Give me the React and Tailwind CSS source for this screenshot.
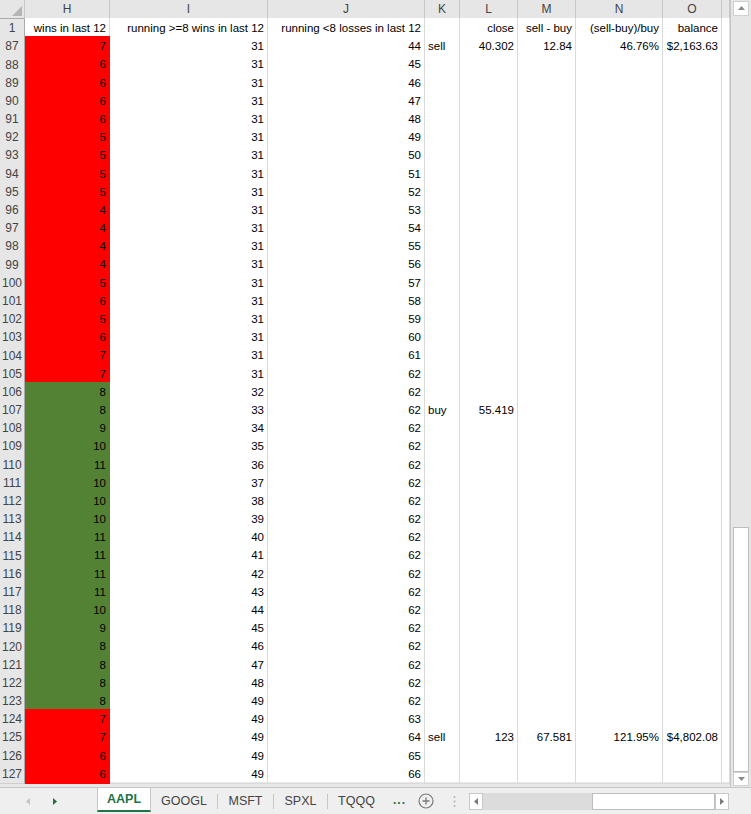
import React from "react";

const H_VALUES = [
  7, 6, 6, 6, 6, 5, 5, 5, 5, 4, 4, 4, 4, 5, 6, 5, 6, 7, 7,
  8, 8, 9, 10, 11, 10, 10, 10, 11, 11, 11, 11, 10, 9, 8, 8, 8, 8,
  7, 7, 6, 6,
];

const TRADES = {
  87: { k: "sell", l: "40.302", m: "12.84", n: "46.76%", o: "$2,163.63" },
  107: { k: "buy", l: "55.419" },
  125: { k: "sell", l: "123", m: "67.581", n: "121.95%", o: "$4,802.08" },
};

const ROWS = H_VALUES.map((h, idx) => {
  const r = 87 + idx;
  const i = r <= 105 ? 31 : r <= 123 ? r - 74 : 49;
  const j = r <= 105 ? r - 43 : r <= 123 ? 62 : r - 61;
  const green = r >= 106 && r <= 123;
  return { r, h, i, j, green, ...(TRADES[r] || {}) };
});

const COLS = "grid grid-cols-[25px_85px_158px_157px_35px_58px_58px_87px_59px_8px]";

function Cell({ children, left = false }) {
  return (
    <div
      className={
        "flex items-center overflow-hidden whitespace-nowrap border-r border-b border-[#dadada] px-[3px] pt-[2px] " +
        (left ? "justify-start" : "justify-end")
      }
    >
      {children}
    </div>
  );
}

function ColHeader({ children }) {
  return (
    <div className="flex items-center justify-center border-r border-b border-r-[#c8c8c8] border-b-[#ababab] bg-[#e6e6e6] text-[12px] text-[#444]">
      {children}
    </div>
  );
}

function RowNum({ children }) {
  return (
    <div className="flex items-center justify-center border-r border-b border-r-[#ababab] border-b-[#d0d0d0] bg-[#e6e6e6] pt-[1px] text-[12px] text-[#444]">
      {children}
    </div>
  );
}

function Tri({ dir, color }) {
  const pts = {
    up: "1,6 4.5,2 8,6",
    down: "1,2 4.5,6 8,2",
    left: "6,1 2,4.5 6,8",
    right: "2,1 6,4.5 2,8",
  }[dir];
  return (
    <svg width="9" height="9" viewBox="0 0 9 9">
      <polygon points={pts} fill={color} />
    </svg>
  );
}

function SheetTab({ children }) {
  return (
    <div className="flex h-full items-center justify-center text-[12.5px] text-[#444]">
      {children}
    </div>
  );
}

function Sep() {
  return <div className="h-[15px] w-px bg-[#c6c6c6]" />;
}

export default function App() {
  return (
    <div className="flex h-[814px] w-[751px] flex-col overflow-hidden bg-[#e8e8e8] font-['Liberation_Sans',Arial,sans-serif] text-[11.5px] text-black">
      <div className="flex h-[787px]">
        {/* worksheet grid */}
        <div className="flex w-[730px] flex-col">
          <div className={COLS + " h-[18px]"}>
            <div className="relative border-r border-b border-r-[#c8c8c8] border-b-[#ababab] bg-[#e6e6e6]">
              <svg className="absolute right-[2px] bottom-[2px]" width="10" height="10" viewBox="0 0 10 10">
                <polygon points="10,0 10,10 0,10" fill="#b5b5b5" />
              </svg>
            </div>
            <ColHeader>H</ColHeader>
            <ColHeader>I</ColHeader>
            <ColHeader>J</ColHeader>
            <ColHeader>K</ColHeader>
            <ColHeader>L</ColHeader>
            <ColHeader>M</ColHeader>
            <ColHeader>N</ColHeader>
            <ColHeader>O</ColHeader>
            <ColHeader></ColHeader>
          </div>

          <div className={COLS + " h-[18.2px] bg-white"}>
            <RowNum>1</RowNum>
            <Cell>wins in last 12</Cell>
            <Cell>running &gt;=8 wins in last 12</Cell>
            <Cell>running &lt;8 losses in last 12</Cell>
            <Cell></Cell>
            <Cell>close</Cell>
            <Cell>sell - buy</Cell>
            <Cell>(sell-buy)/buy</Cell>
            <Cell>balance</Cell>
            <Cell></Cell>
          </div>

          {ROWS.map((row) => (
            <div key={row.r} className={COLS + " h-[18.2px] bg-white"}>
              <RowNum>{row.r}</RowNum>
              <div
                className={
                  "flex items-center justify-end border-r border-b px-[3px] pt-[2px] " +
                  (row.green
                    ? "border-[#548235] bg-[#548235]"
                    : "border-[#ff0000] bg-[#ff0000]")
                }
              >
                {row.h}
              </div>
              <Cell>{row.i}</Cell>
              <Cell>{row.j}</Cell>
              <Cell left>{row.k}</Cell>
              <Cell>{row.l}</Cell>
              <Cell>{row.m}</Cell>
              <Cell>{row.n}</Cell>
              <Cell>{row.o}</Cell>
              <Cell></Cell>
            </div>
          ))}
        </div>

        {/* vertical scrollbar */}
        <div className="flex w-[21px] flex-col border-l border-[#c6c6c6] bg-[#e6e6e6] px-[2px]">
          <div className="mt-[1px] flex h-[15px] items-center justify-center border border-[#d0d0d0] bg-white">
            <Tri dir="up" color="#8a8a8a" />
          </div>
          <div className="flex-1" />
          <div className="h-[245px] border border-[#bdbdbd] bg-white" />
          <div className="mb-[1px] flex h-[14px] items-center justify-center border border-[#d0d0d0] bg-white">
            <Tri dir="down" color="#8a8a8a" />
          </div>
        </div>
      </div>

      {/* sheet tabs bar */}
      <div className="flex h-[27px] items-stretch border-t border-[#c6c6c6] bg-[#efefef]">
        <div className="flex w-[97px] items-center">
          <div className="ml-[24px]">
            <Tri dir="left" color="#c4c4c4" />
          </div>
          <div className="ml-[18px]">
            <Tri dir="right" color="#217346" />
          </div>
        </div>
        <div className="flex h-[24px] w-[54px] items-center justify-center border-x border-b-2 border-x-[#c6c6c6] border-b-[#217346] bg-white text-[12.5px] font-bold text-[#217346]">
          AAPL
        </div>
        <div className="flex items-center">
          <div className="w-[66px]">
            <SheetTab>GOOGL</SheetTab>
          </div>
          <Sep />
          <div className="w-[55px]">
            <SheetTab>MSFT</SheetTab>
          </div>
          <Sep />
          <div className="w-[53px]">
            <SheetTab>SPXL</SheetTab>
          </div>
          <Sep />
          <div className="w-[57px]">
            <SheetTab>TQQQ</SheetTab>
          </div>
          <div className="ml-[8px] flex h-full items-center pb-[3px] text-[12px] font-bold tracking-[1px] text-[#217346]">
            ...
          </div>
          <svg className="ml-[12px]" width="16" height="16" viewBox="0 0 16 16">
            <circle cx="8" cy="8" r="7" fill="none" stroke="#7a7a7a" strokeWidth="1.2" />
            <path d="M8 4.5v7M4.5 8h7" stroke="#7a7a7a" strokeWidth="1.3" />
          </svg>
          <svg className="ml-[19px]" width="3" height="13" viewBox="0 0 3 13">
            <circle cx="1.5" cy="2" r="1" fill="#b0b0b0" />
            <circle cx="1.5" cy="6.5" r="1" fill="#b0b0b0" />
            <circle cx="1.5" cy="11" r="1" fill="#b0b0b0" />
          </svg>
          {/* horizontal scrollbar */}
          <div className="ml-[13px] flex h-[17px] w-[260px]">
            <div className="flex w-[14px] items-center justify-center border border-[#c8c8c8] bg-white">
              <Tri dir="left" color="#7a7a7a" />
            </div>
            <div className="w-[109px] bg-[#dcdcdc]" />
            <div className="w-[123px] border border-[#bdbdbd] bg-white" />
            <div className="flex w-[14px] items-center justify-center border border-[#c8c8c8] bg-white">
              <Tri dir="right" color="#7a7a7a" />
            </div>
          </div>
        </div>
      </div>
    </div>
  );
}
